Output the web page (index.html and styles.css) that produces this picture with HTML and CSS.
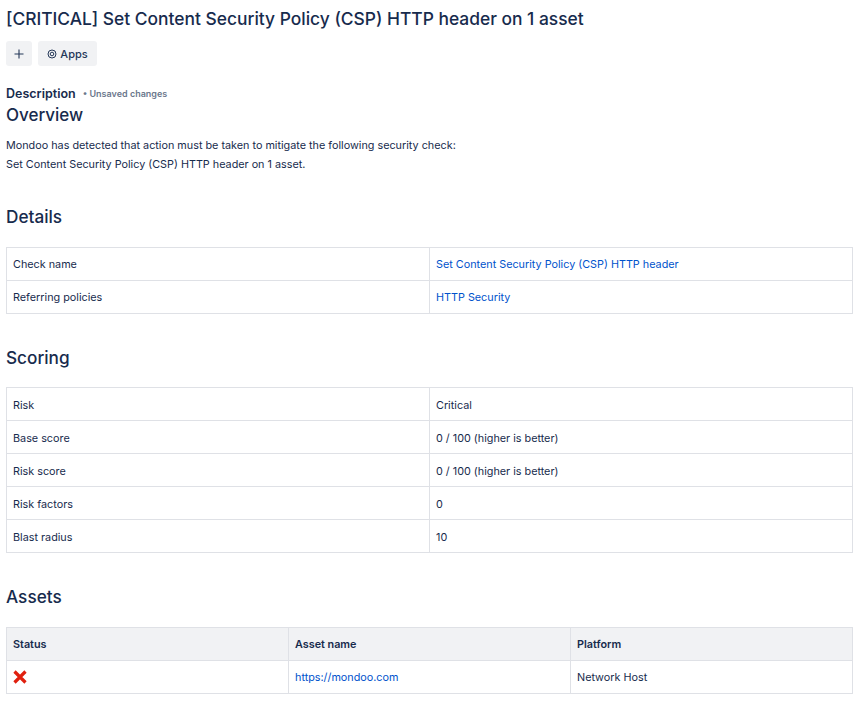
FILE: index.html
```html
<!DOCTYPE html>
<html lang="en">
<head>
<meta charset="utf-8">
<title>Issue</title>
<link rel="stylesheet" href="styles.css">
</head>
<body>
<h1 class="title">[CRITICAL] Set Content Security Policy (CSP) HTTP header on 1 asset</h1>
<div class="actions">
  <button class="btn btn-plus" aria-label="Add"><svg width="12" height="12" viewBox="0 0 12 12"><path d="M6 1.5v9M1.5 6h9" stroke="#253858" stroke-width="1.1" fill="none"/></svg></button>
  <button class="btn btn-apps"><svg width="10" height="10" viewBox="0 0 10 10"><circle cx="5" cy="5" r="4" stroke="#253858" stroke-width="1" fill="none"/><circle cx="5" cy="5" r="1.8" stroke="#253858" stroke-width="1" fill="none"/></svg>Apps</button>
</div>
<div class="desc-head"><span class="desc-label">Description</span><span class="unsaved">• Unsaved changes</span></div>
<h2 class="overview">Overview</h2>
<p class="intro">Mondoo has detected that action must be taken to mitigate the following security check:<br>Set Content Security Policy (CSP) HTTP header on 1 asset.</p>
<h2 class="section details">Details</h2>
<table class="tbl two">
  <tr><td>Check name</td><td><a href="#">Set Content Security Policy (CSP) HTTP header</a></td></tr>
  <tr><td>Referring policies</td><td><a href="#">HTTP Security</a></td></tr>
</table>
<h2 class="section scoring">Scoring</h2>
<table class="tbl two scores">
  <tr><td>Risk</td><td>Critical</td></tr>
  <tr><td>Base score</td><td>0 / 100 (higher is better)</td></tr>
  <tr><td>Risk score</td><td>0 / 100 (higher is better)</td></tr>
  <tr><td>Risk factors</td><td>0</td></tr>
  <tr><td>Blast radius</td><td>10</td></tr>
</table>
<h2 class="section assets">Assets</h2>
<table class="tbl three">
  <tr><th>Status</th><th>Asset name</th><th>Platform</th></tr>
  <tr><td><svg class="cross" width="14" height="14" viewBox="0 0 14 14"><path d="M1.5 1.5 12.5 12.5M12.5 1.5 1.5 12.5" stroke="#e0200f" stroke-width="3.2" fill="none"/></svg></td><td><a href="#">https://mondoo.com</a></td><td>Network Host</td></tr>
</table>
</body>
</html>
```
FILE: styles.css
```css
html, body { margin: 0; padding: 0; background: #fff; }
body { width: 861px; padding: 0 8px 0 6px; box-sizing: border-box; font-family: Inter, "Liberation Sans", sans-serif; color: #172b4d; font-size: 10.8px; overflow: hidden; }
.title { margin: 0; padding-top: 8px; font-size: 17.4px; line-height: 22px; font-weight: 500; color: #172b4d; }
.actions { display: flex; gap: 6px; margin-top: 11px; }
.btn { height: 25px; border: 0; border-radius: 3px; background: #f1f2f4; display: flex; align-items: center; justify-content: center; color: #253858; font: 500 11px Inter, "Liberation Sans", sans-serif; padding: 0; }
.btn-plus { width: 26px; }
.btn-apps { width: 59px; gap: 3px; }
.desc-head { display: flex; align-items: center; gap: 7px; margin-top: 18px; height: 18px; }
.desc-label { font-size: 12.5px; font-weight: 600; }
.unsaved { font-size: 9px; font-weight: 600; color: #6b778c; }
.overview { margin: 0; padding-top: 2px; font-size: 17px; line-height: 22px; font-weight: 500; }
.intro { margin: 10px 0 0; line-height: 19px; font-size: 10.8px; }
.section { margin: 0 0 19px; font-size: 17.2px; line-height: 22px; font-weight: 500; }
.details { margin-top: 32px; }
.scoring { margin-top: 33px; margin-bottom: 18px; }
.assets { margin-top: 33px; }
.tbl { width: 847px; border-collapse: collapse; table-layout: fixed; }
.tbl td, .tbl th { border: 1px solid #dfe1e6; height: 33px; box-sizing: border-box; padding: 0 6px; text-align: left; font-size: 10.8px; }
.tbl.scores td { padding-top: 2px; }
.tbl th { background: #f1f2f4; font-weight: 600; }
.two td:first-child { width: 423px; }
.three th:nth-child(1) { width: 282px; }
.three th:nth-child(2) { width: 282px; }
a { color: #0052cc; text-decoration: none; }
.cross { display: block; }
```
